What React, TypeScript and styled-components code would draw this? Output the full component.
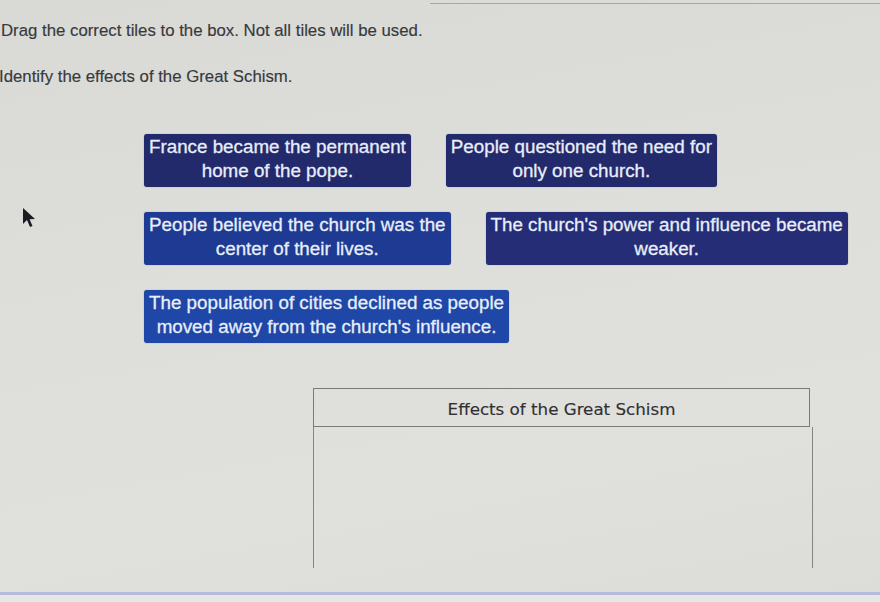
import React from "react";
import styled, { createGlobalStyle } from "styled-components";

const GlobalStyle = createGlobalStyle`
  html, body {
    margin: 0;
    padding: 0;
    background: #dcdcd8;
  }
  body {
    font-family: "Liberation Sans", Arial, sans-serif;
  }
`;

type Tone = "navy" | "indigo" | "royal" | "bright";

const toneColors: Record<Tone, string> = {
  navy: "#232a6c",
  indigo: "#252d76",
  royal: "#1e3a92",
  bright: "#1e47a7",
};

const Page = styled.div`
  position: relative;
  width: 880px;
  height: 602px;
  overflow: hidden;
  display: flex;
  flex-direction: column;
  background: linear-gradient(170deg, #d9d9d5 0%, #dededa 45%, #e0e0dc 75%, #dcdcd8 100%);
  color: #3a3b3f;
`;

const TopRule = styled.div`
  height: 3px;
  margin-left: 430px;
  border-bottom: 1px solid #a7a7a7;
`;

const Prompt = styled.div`
  display: flex;
  flex-direction: column;
  gap: 27px;
  margin-top: 17px;
  padding-left: 1px;
`;

const PromptLine = styled.p<{ $shift?: number }>`
  margin: 0 0 0 ${(p) => p.$shift ?? 0}px;
  font-size: 16.8px;
  line-height: 19px;
  color: #38393d;
  white-space: nowrap;
  -webkit-text-stroke: 0.15px #38393d;
`;

const TileBank = styled.div`
  display: flex;
  flex-direction: column;
  gap: 25px;
  margin-top: 48px;
  padding-left: 144px;
`;

const TileRow = styled.div`
  display: flex;
  gap: 35px;
`;

const Tile = styled.div<{ $tone: Tone }>`
  box-sizing: border-box;
  height: 53px;
  padding: 1px 5px 4px;
  border-radius: 3px;
  background: ${(p) => toneColors[p.$tone]};
  color: #e8eef9;
  font-size: 18.8px;
  line-height: 24px;
  text-align: center;
  white-space: nowrap;
  -webkit-text-stroke: 0.3px #e8eef9;
  box-shadow: 0 0 1px rgba(20, 30, 80, 0.5);
`;

const DropBox = styled.div`
  width: 497px;
  margin: 45px 0 0 313px;
  display: flex;
  flex-direction: column;
`;

const BoxHeader = styled.div`
  box-sizing: border-box;
  height: 39px;
  border: 1px solid #7a7a78;
  display: flex;
  align-items: center;
  justify-content: center;
  padding-top: 2px;
  font-family: "DejaVu Sans", Verdana, sans-serif;
  font-size: 16.7px;
  color: #303033;
  -webkit-text-stroke: 0.15px #303033;
`;

const BoxBody = styled.div`
  height: 141px;
  border-left: 1px solid #858583;
  border-right: 1px solid #858583;
  margin-right: -3px;
`;

const Footer = styled.div`
  margin-top: auto;
  height: 7px;
  border-top: 3px solid #b6badb;
  background: #e6e6e4;
`;

const Pointer = styled.svg`
  position: absolute;
  left: 22px;
  top: 207px;
  width: 14px;
  height: 21px;
`;

const tiles: { text: [string, string]; tone: Tone }[][] = [
  [
    { text: ["France became the permanent", "home of the pope."], tone: "navy" },
    { text: ["People questioned the need for", "only one church."], tone: "navy" },
  ],
  [
    { text: ["People believed the church was the", "center of their lives."], tone: "royal" },
    { text: ["The church's power and influence became", "weaker."], tone: "indigo" },
  ],
  [
    {
      text: ["The population of cities declined as people", "moved away from the church's influence."],
      tone: "bright",
    },
  ],
];

export default function App() {
  return (
    <>
      <GlobalStyle />
      <Page>
        <TopRule />
        <Prompt>
          <PromptLine>Drag the correct tiles to the box. Not all tiles will be used.</PromptLine>
          <PromptLine $shift={-2}>Identify the effects of the Great Schism.</PromptLine>
        </Prompt>

        <TileBank>
          {tiles.map((row, i) => (
            <TileRow key={i}>
              {row.map((t) => (
                <Tile key={t.text[0]} $tone={t.tone}>
                  {t.text[0]}
                  <br />
                  {t.text[1]}
                </Tile>
              ))}
            </TileRow>
          ))}
        </TileBank>

        <DropBox>
          <BoxHeader>Effects of the Great Schism</BoxHeader>
          <BoxBody />
        </DropBox>

        <Footer />

        <Pointer viewBox="0 0 14 21">
          <path d="M1 1 L1 17 L5 13 L8 20 L10.5 19 L7.6 12.2 L13 12 Z" fill="#1b1c22" />
        </Pointer>
      </Page>
    </>
  );
}
